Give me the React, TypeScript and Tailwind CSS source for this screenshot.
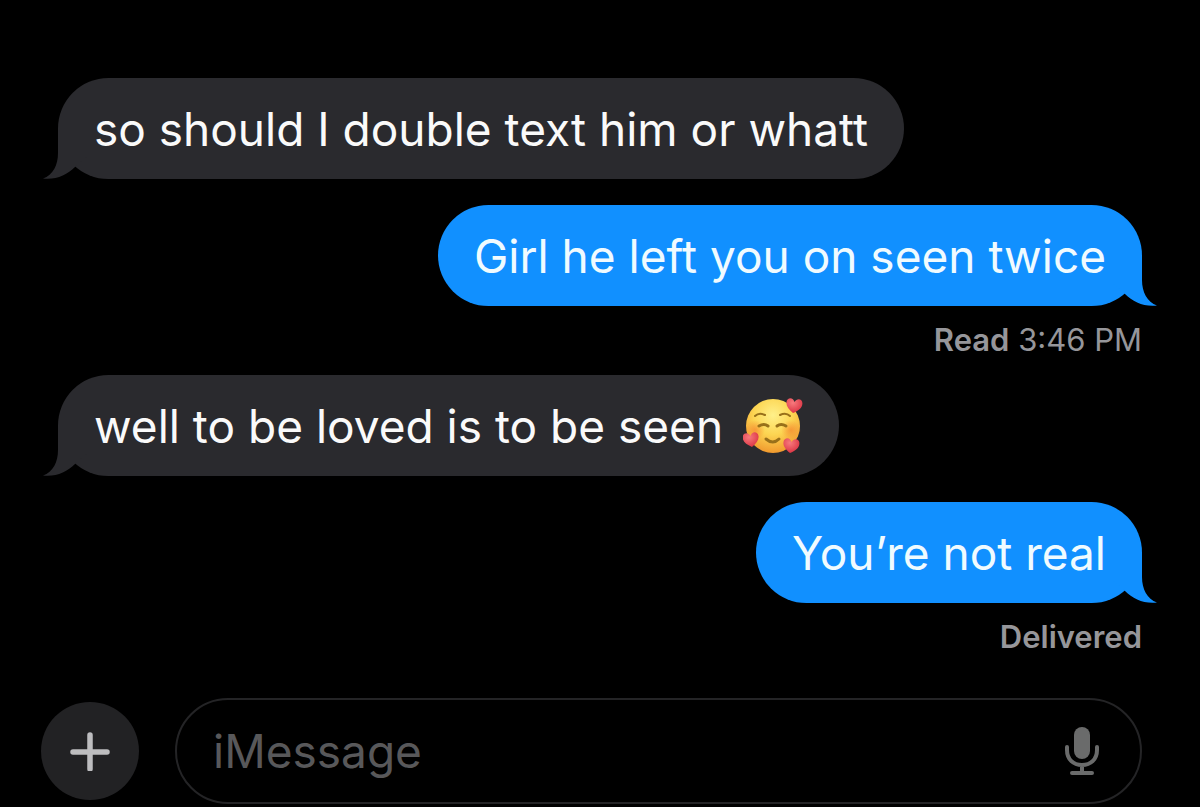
import { FunctionComponent, ReactNode } from "react";

interface BubbleProps {
    sent?: boolean;
    children: ReactNode;
}

const Bubble: FunctionComponent<BubbleProps> = ({ sent, children }) => {
    return (
        <div className={sent
            ? "relative self-end rounded-full bg-[#1190ff] px-9 pt-[21px] pb-5 text-[46px] leading-[60px] text-[#f0fbff]"
            : "relative self-start rounded-full bg-[#2a2a2e] px-9 pt-[21px] pb-5 text-[46px] leading-[60px] text-[#fafafa]"}>
            <svg
                className={sent
                    ? "absolute bottom-0 -right-4 h-[51px] w-16 -scale-x-100 fill-[#1190ff]"
                    : "absolute bottom-0 -left-4 h-[51px] w-16 fill-[#2a2a2e]"}
                viewBox="0 0 64 51"
                aria-hidden="true"
            >
                <path d="M16 0V25C16 37 11 47 1 50.5C14 52 25 47 33 39L50 24V0Z" />
            </svg>
            <p className="relative flex items-center gap-5 whitespace-nowrap">{children}</p>
        </div>
    );
};

const Heart: FunctionComponent<{ transform: string }> = ({ transform }) => {
    return (
        <path
            transform={transform}
            fill="url(#heart)"
            d="M0 7C-5 4-8 1-8-3C-8-8-2-9 0-4C2-9 8-8 8-3C8 1 5 4 0 7Z"
        />
    );
};

const LovedFace: FunctionComponent = () => {
    return (
        <svg className="h-[60px] w-[60px]" viewBox="0 0 60 60" role="img" aria-label="smiling face with hearts">
            <defs>
                <radialGradient id="face" cx="0.5" cy="0.3" r="0.72">
                    <stop offset="0" stopColor="#fff08a" />
                    <stop offset="0.5" stopColor="#fcd552" />
                    <stop offset="1" stopColor="#f0962c" />
                </radialGradient>
                <radialGradient id="cheek">
                    <stop offset="0" stopColor="#f5842e" stopOpacity="0.7" />
                    <stop offset="1" stopColor="#f5842e" stopOpacity="0" />
                </radialGradient>
                <radialGradient id="heart" cx="0.4" cy="0.3" r="0.7">
                    <stop offset="0" stopColor="#f77a7d" />
                    <stop offset="1" stopColor="#dc3444" />
                </radialGradient>
            </defs>
            <circle cx="30" cy="30" r="27" fill="url(#face)" />
            <circle cx="12" cy="34" r="10" fill="url(#cheek)" />
            <circle cx="48" cy="34" r="10" fill="url(#cheek)" />
            <g fill="none" stroke="#98701a" strokeLinecap="round">
                <path d="M12 20Q16 16 22 19" strokeWidth="2" />
                <path d="M37 19Q43 16 47 20" strokeWidth="2" />
                <path d="M16 30Q21 27 25 30" strokeWidth="3" />
                <path d="M34 30Q38 27 43 30" strokeWidth="3" />
                <path d="M23 43Q30 49 36 43" strokeWidth="3" />
            </g>
            <Heart transform="translate(51 10) rotate(8)" />
            <Heart transform="translate(8 44) rotate(-8)" />
            <Heart transform="translate(48 50) rotate(8)" />
        </svg>
    );
};

const App: FunctionComponent = () => {
    return (
        <div className="min-h-screen bg-black pt-[78px] font-['Inter',sans-serif]">
            <main className="flex flex-col px-[58px]">
                <Bubble>so should I double text him or whatt</Bubble>
                <div className="h-[26px]" />
                <Bubble sent>Girl he left you on seen twice</Bubble>
                <p className="mt-4 mb-[17px] self-end text-[31px] leading-9 text-[#96969a]">
                    <span className="font-semibold">Read</span> 3:46 PM
                </p>
                <Bubble>
                    well to be loved is to be seen
                    <LovedFace />
                </Bubble>
                <div className="h-[26px]" />
                <Bubble sent>You’re not real</Bubble>
                <p className="mt-4 self-end text-[31px] leading-9 font-semibold text-[#96969a]">Delivered</p>
            </main>
            <form className="mt-[43px] flex items-center gap-9 pr-[58px] pb-[2px] pl-[41px]">
                <button
                    type="button"
                    aria-label="Add"
                    className="flex h-[98px] w-[98px] shrink-0 items-center justify-center rounded-full bg-[#222224]"
                >
                    <svg className="h-10 w-10" viewBox="0 0 40 40" stroke="#bdbdbf" strokeWidth="5.5" strokeLinecap="round">
                        <path d="M20 4V38M3 21H37" />
                    </svg>
                </button>
                <div className="flex h-[106px] min-w-0 flex-1 items-center rounded-full border-2 border-[#242426] pr-10 pl-9">
                    <input
                        type="text"
                        aria-label="Message"
                        placeholder="iMessage"
                        className="min-w-0 flex-1 bg-transparent text-[46px] leading-[60px] text-white outline-none placeholder:text-[#58585a]"
                    />
                    <button type="button" aria-label="Dictate">
                        <svg className="h-[50px] w-9" viewBox="0 0 36 50" fill="none" stroke="#6a6b6b" strokeWidth="4" strokeLinecap="round">
                            <rect x="10" y="1" width="16" height="32" rx="8" fill="#6a6b6b" stroke="none" />
                            <path d="M3 21V24C3 33 9 39 18 39C27 39 33 33 33 24V21M18 39V47M8 47H28" />
                        </svg>
                    </button>
                </div>
            </form>
        </div>
    );
};

export default App;
